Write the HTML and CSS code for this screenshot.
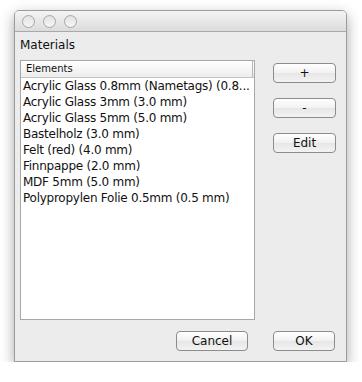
FILE: index.html
```html
<!DOCTYPE html>
<html lang="en">
<head>
    <meta charset="UTF-8">
    <title>Materials</title>
    <link rel="stylesheet" href="styles.css">
</head>
<body>
    <div class="window">
        <div class="titlebar">
            <span class="light"></span>
            <span class="light"></span>
            <span class="light"></span>
        </div>
        <div class="content">
            <div class="label">Materials</div>
            <div class="main">
                <div class="list">
                    <div class="list-header"><span>Elements</span></div>
                    <div class="row">Acrylic Glass 0.8mm (Nametags) (0.8...</div>
                    <div class="row">Acrylic Glass 3mm (3.0 mm)</div>
                    <div class="row">Acrylic Glass 5mm (5.0 mm)</div>
                    <div class="row">Bastelholz (3.0 mm)</div>
                    <div class="row">Felt (red) (4.0 mm)</div>
                    <div class="row">Finnpappe (2.0 mm)</div>
                    <div class="row">MDF 5mm (5.0 mm)</div>
                    <div class="row">Polypropylen Folie 0.5mm (0.5 mm)</div>
                </div>
                <div class="side">
                    <button class="btn">+</button>
                    <button class="btn">-</button>
                    <button class="btn">Edit</button>
                </div>
            </div>
            <div class="footer">
                <button class="btn cancel">Cancel</button>
                <button class="btn ok">OK</button>
            </div>
        </div>
    </div>
</body>
</html>
```

FILE: styles.css
```css
body {
    margin: 0;
    background: #ffffff;
    font-family: "Lucida Grande", "DejaVu Sans", sans-serif;
    color: #111;
}
.window {
    margin: 10px 0 0 14px;
    width: 333px;
    height: 352px;
    background: #ececec;
    border: 1px solid #9c9c9c;
    border-radius: 5px 5px 0 0;
    box-shadow: 0 5px 14px rgba(0,0,0,0.35);
    box-sizing: border-box;
    display: flex;
    flex-direction: column;
}
.titlebar {
    height: 20px;
    border-bottom: 1px solid #a9a9a9;
    border-radius: 4px 4px 0 0;
    background: linear-gradient(#f4f4f4, #dcdcdc);
    display: flex;
    align-items: center;
    gap: 8px;
    padding-left: 7px;
}
.light {
    width: 11px;
    height: 11px;
    border-radius: 50%;
    border: 1px solid #a6a6a6;
    background: linear-gradient(#e2e2e2, #f6f6f6);
}
.content {
    padding: 5px 10px 0 5px;
}
.label {
    height: 16px;
    line-height: 16px;
    font-size: 12px;
    margin-bottom: 7px;
}
.main {
    display: flex;
    gap: 18px;
}
.list {
    width: 235px;
    height: 260px;
    box-sizing: border-box;
    background: #fff;
    border: 1px solid #a7a7a7;
}
.list-header {
    height: 16px;
    border-bottom: 1px solid #c4c4c4;
    background: linear-gradient(#ffffff, #ededed);
    padding-right: 1px;
}
.list-header span {
    display: block;
    height: 16px;
    line-height: 15px;
    font-size: 10px;
    padding-left: 5px;
    border-right: 1px solid #b8b8b8;
}
.row {
    height: 16px;
    line-height: 16px;
    font-size: 12px;
    letter-spacing: -0.25px;
    padding-left: 2px;
    white-space: nowrap;
    overflow: hidden;
}
.side {
    display: flex;
    flex-direction: column;
    gap: 15px;
    padding-top: 3px;
}
.btn {
    width: 63px;
    height: 20px;
    padding: 0;
    font-family: "Lucida Grande", "DejaVu Sans", sans-serif;
    font-size: 12px;
    color: #111;
    background: linear-gradient(#ffffff, #f1f1f1 50%, #e6e6e6 51%, #f3f3f3);
    border: 1px solid #8c8c8c;
    border-radius: 4px;
}
.footer {
    display: flex;
    justify-content: flex-end;
    gap: 25px;
    margin-top: 11px;
    padding-right: 1px;
}
.cancel {
    width: 72px;
}
.ok {
    width: 62px;
}
```
